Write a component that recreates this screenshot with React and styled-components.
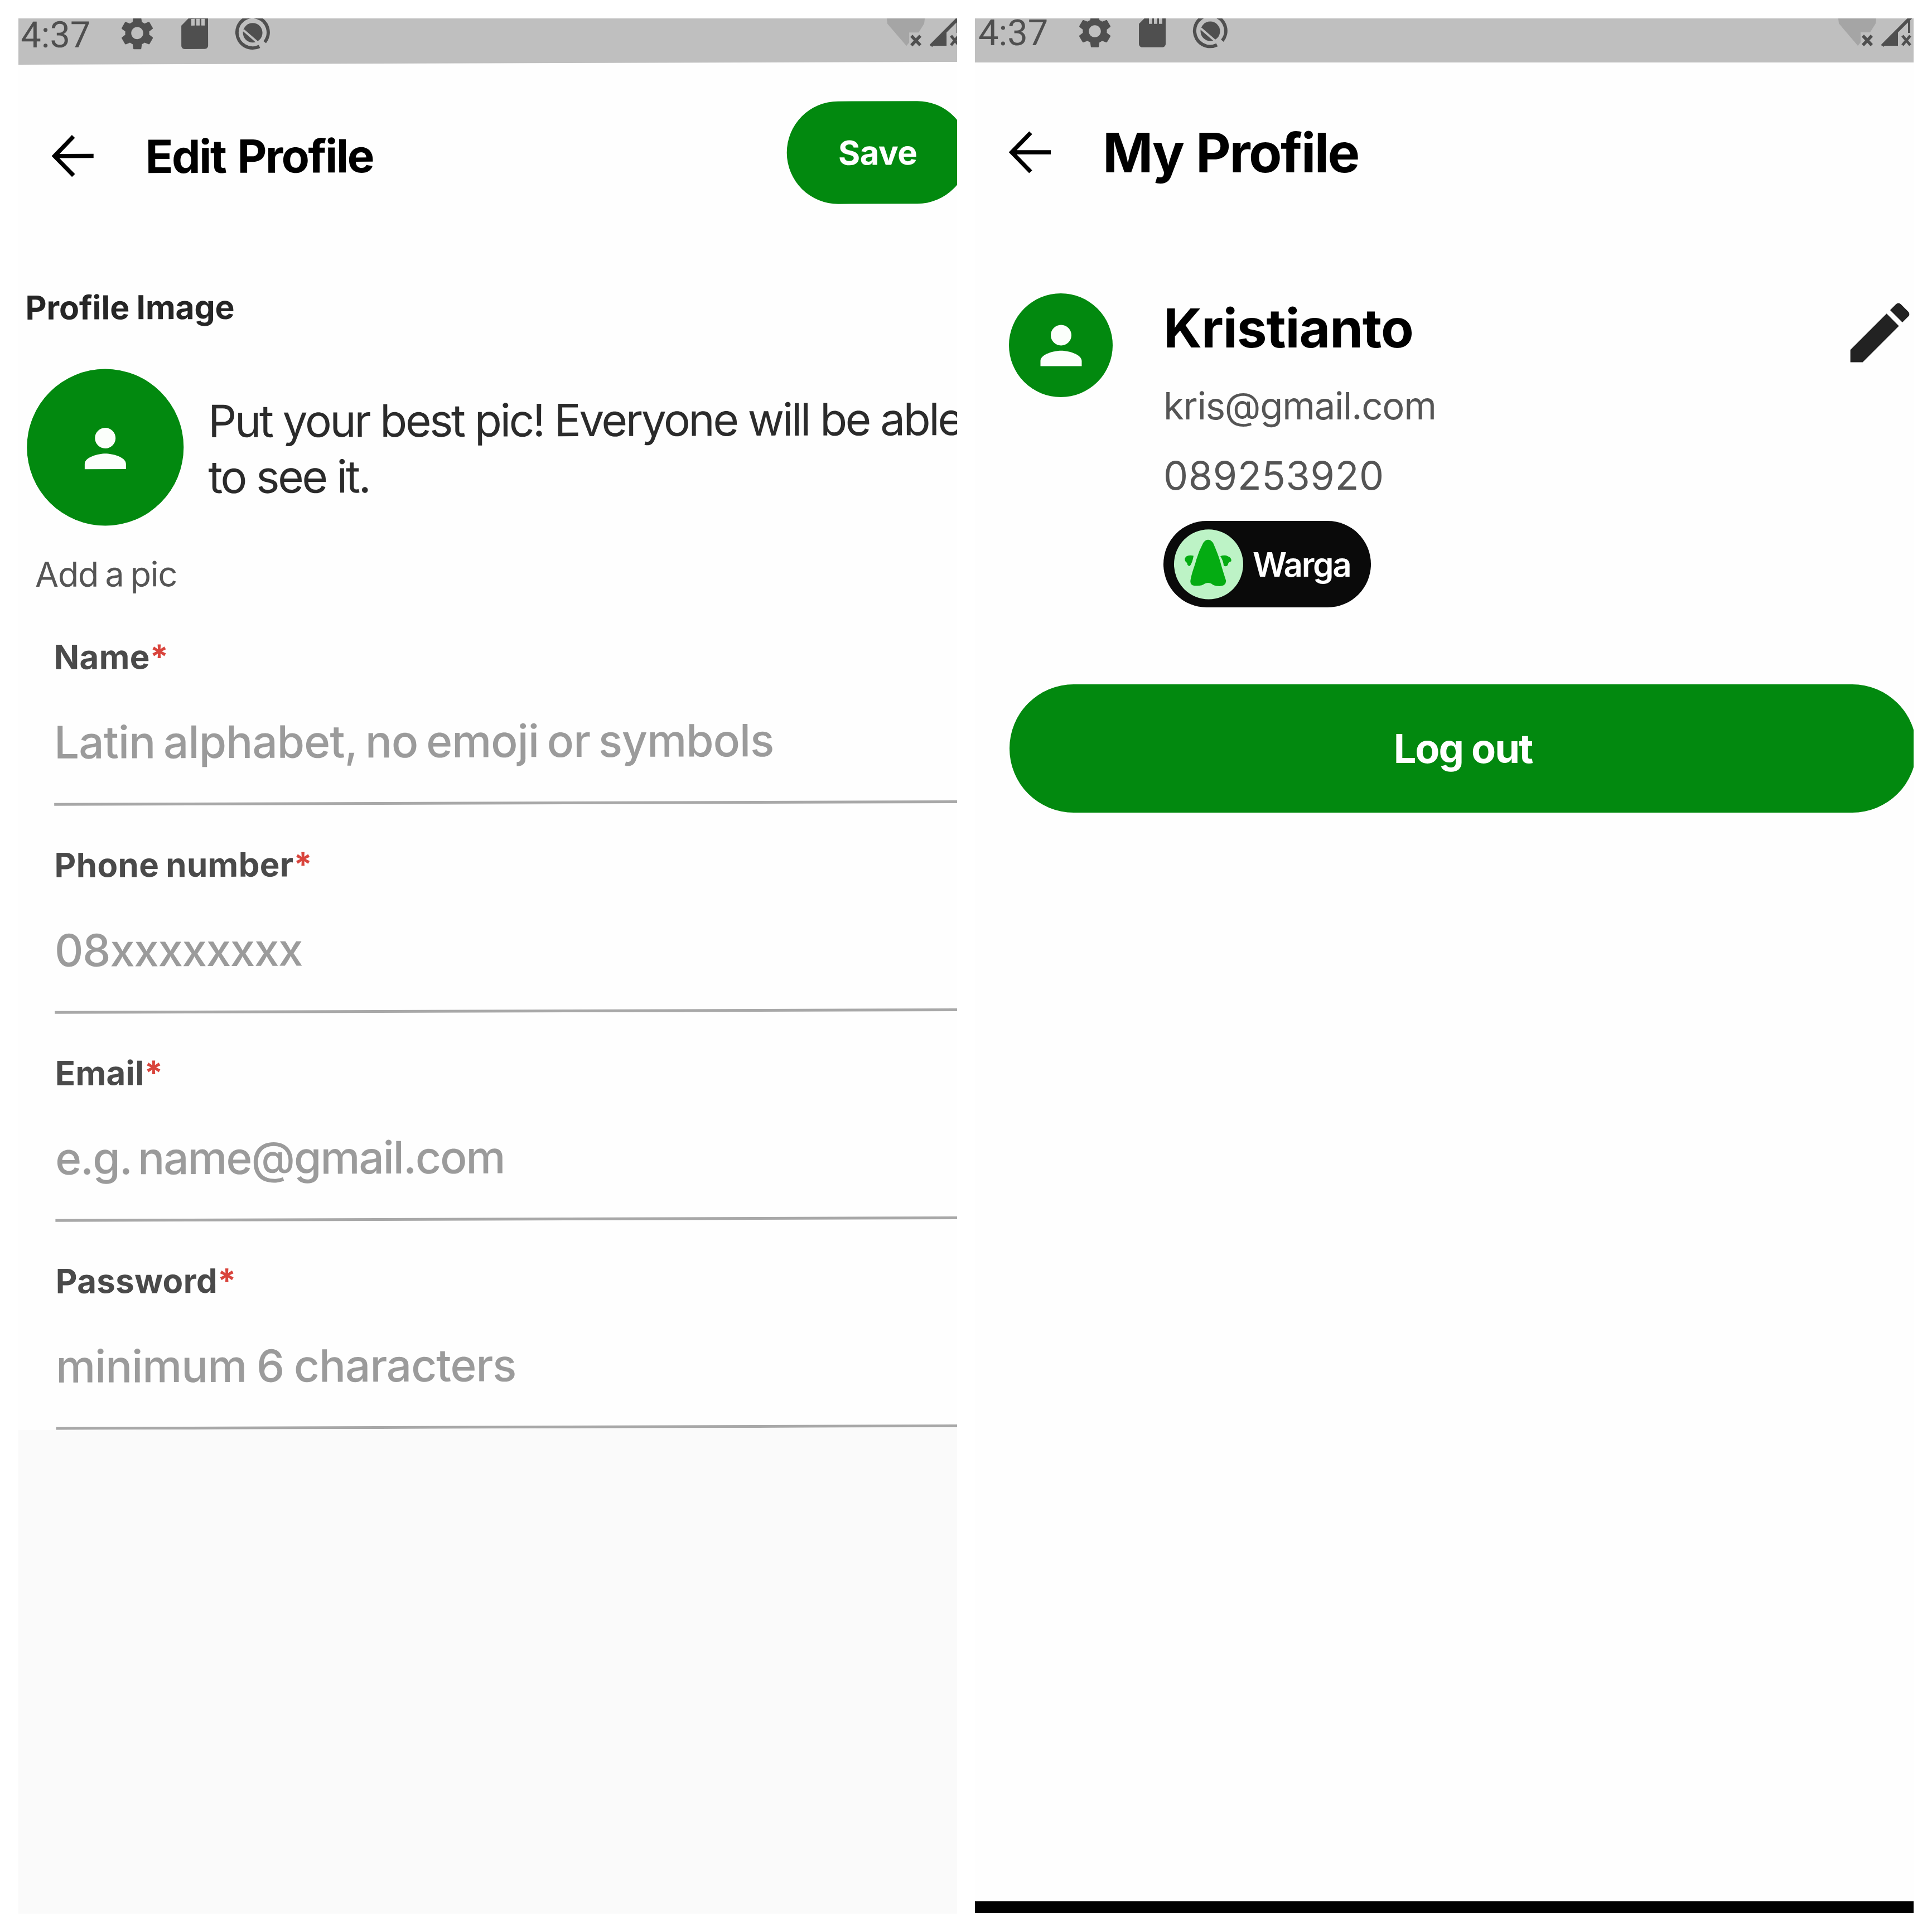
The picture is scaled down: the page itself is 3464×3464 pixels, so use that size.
import React from "react";
import styled, { createGlobalStyle } from "styled-components";

const GREEN = "#02890f";
const INK = "#4f4f4f";

const GlobalStyle = createGlobalStyle`
  * { box-sizing: border-box; }
  body { margin: 0; background: #fff; }
`;

const Board = styled.main`
  display: flex;
  gap: 32px;
  width: 3464px;
  height: 3464px;
  padding: 33px;
  overflow: hidden;
  font-family: Inter, "Liberation Sans", sans-serif;
  background: #fff;
`;

const Screen = styled.section`
  width: 1683px;
  height: 3398px;
  overflow: hidden;
  background: #fefefe;
`;

const Sheet = styled.div`
  display: flex;
  flex-direction: column;
  width: 1683px;
  height: 3398px;
  transform: rotate(${(p) => p.$tilt || 0}deg);
  transform-origin: 0 0;
`;

const StatusBar = styled.header`
  display: flex;
  flex: none;
  justify-content: space-between;
  height: ${(p) => p.$height}px;
  margin: 0 -20px;
  padding: 0 20px;
  background: #bfbfbf;
  box-shadow: 0 -20px 0 #bfbfbf;
`;

const StatusIcons = styled.div`
  display: flex;
  align-items: center;
  height: 54px;
  gap: 31px;
  padding-left: ${(p) => p.$inset}px;
  margin-top: ${(p) => p.$lift}px;
`;

const Clock = styled.span`
  width: 142px;
  padding-top: 6px;
  font: 400 65px/54px Roboto, sans-serif;
  color: ${INK};
`;

const SignalBox = styled.div`
  width: 125px;
  flex: none;
  margin-top: ${(p) => p.$drop}px;
  margin-right: ${(p) => p.$edge}px;
  svg { display: block; overflow: visible; }
`;

const AppBar = styled.div`
  display: flex;
  flex: none;
  align-items: center;
  height: ${(p) => p.$height}px;
  padding-left: ${(p) => p.$inset}px;
`;

const Title = styled.h1`
  flex: 1;
  margin: 0 0 0 92px;
  padding-top: 3px;
  font-size: ${(p) => p.$size}px;
  line-height: 120px;
  font-weight: 700;
  letter-spacing: ${(p) => p.$track}em;
  word-spacing: ${(p) => p.$space}em;
  color: #000;
  white-space: nowrap;
`;

const SaveButton = styled.button`
  flex: none;
  width: 326px;
  height: 184px;
  margin: -4px -20px 0 0;
  padding: 0;
  border: 0;
  border-radius: 92px;
  background: ${GREEN};
  color: #fff;
  font: 700 60px/80px Inter, sans-serif;
  letter-spacing: -0.01em;
`;

const SectionLabel = styled.h2`
  flex: none;
  margin: 68px 0 0 11px;
  font-size: 59px;
  line-height: 80px;
  font-weight: 700;
  letter-spacing: -0.004em;
  word-spacing: -0.02em;
  color: #262626;
`;

const PictureRow = styled.div`
  display: flex;
  flex: none;
  gap: 44px;
  margin: 70px 0 0 13px;
`;

const Avatar = styled.div`
  display: flex;
  flex: none;
  align-items: center;
  justify-content: center;
  width: ${(p) => p.$size}px;
  height: ${(p) => p.$size}px;
  padding-top: ${(p) => p.$drop || 0}px;
  border-radius: 50%;
  background: ${GREEN};
`;

const Hint = styled.p`
  margin: 44px 0 0;
  font-size: 80px;
  line-height: 100px;
  letter-spacing: -0.042em;
  word-spacing: 0;
  color: #2b2b2b;
  white-space: nowrap;
`;

const AddPicture = styled.span`
  flex: none;
  height: 87px;
  margin: 42px 0 0 27px;
  font-size: 61px;
  line-height: 90px;
  letter-spacing: -0.02em;
  word-spacing: -0.06em;
  color: #555;
`;

const Field = styled.div`
  display: flex;
  flex: none;
  flex-direction: column;
  gap: 63px;
  height: 373px;
  margin: 0 -20px 0 60px;
  padding-top: 66px;
  border-bottom: 5px solid #a8a8a8;
`;

const FieldLabel = styled.label`
  font-size: 60px;
  line-height: 80px;
  font-weight: 700;
  letter-spacing: 0.005em;
  word-spacing: -0.04em;
  color: #4a4a4a;
`;

const Required = styled.span`
  color: #d9443c;
`;

const Placeholder = styled.span`
  font-size: 80px;
  line-height: 100px;
  font-weight: 500;
  letter-spacing: ${(p) => p.$track}em;
  word-spacing: ${(p) => p.$space}em;
  color: #9b9b9b;
  white-space: nowrap;
`;

const Filler = styled.div`
  flex: none;
  height: 900px;
  margin: 0 -20px;
  background: #fafafa;
`;

const ProfileRow = styled.div`
  display: flex;
  flex: none;
  align-items: flex-start;
  height: 794px;
  padding: 93px 0 0 61px;
`;

const Details = styled.div`
  display: flex;
  flex: 1;
  flex-direction: column;
  align-items: flex-start;
  margin-left: 91px;
`;

const PersonName = styled.h2`
  margin: 2px 0 0;
  font-size: 96px;
  line-height: 120px;
  font-weight: 700;
  letter-spacing: -0.011em;
  color: #000;
`;

const Detail = styled.span`
  margin-top: ${(p) => p.$gap}px;
  font-size: ${(p) => p.$size}px;
  line-height: 90px;
  letter-spacing: ${(p) => p.$track}em;
  color: #555;
`;

const Badge = styled.div`
  display: flex;
  align-items: center;
  gap: 17px;
  width: 372px;
  height: 155px;
  margin: 36px 0 0;
  padding-left: 19px;
  border-radius: 78px;
  background: #0a0a0a;
  color: #fff;
  font-size: 60px;
  font-weight: 600;
  line-height: 80px;
  letter-spacing: -0.038em;
`;

const EditIcon = styled.svg`
  flex: none;
  margin-right: -10px;
`;

const LogoutButton = styled.button`
  flex: none;
  width: 1626px;
  height: 230px;
  margin: 0 0 0 62px;
  padding: 0;
  border: 0;
  border-radius: 115px;
  background: ${GREEN};
  color: #fff;
  font: 700 72px/90px Inter, sans-serif;
  letter-spacing: -0.028em;
  word-spacing: 0;
`;

const NavBar = styled.div`
  flex: none;
  height: 21px;
  margin: auto 0 1px;
  background: #000;
`;

const Gear = () => (
  <svg width="72" height="72" viewBox="0 0 24 24" fill={INK}>
    <path d="M19.14 12.94c.04-.3.06-.61.06-.94 0-.32-.02-.64-.07-.94l2.03-1.58a.49.49 0 0 0 .12-.61l-1.92-3.32a.488.488 0 0 0-.59-.22l-2.39.96c-.5-.38-1.03-.7-1.62-.94l-.36-2.54a.484.484 0 0 0-.48-.41h-3.84c-.24 0-.43.17-.47.41l-.36 2.54c-.59.24-1.13.57-1.62.94l-2.39-.96c-.22-.08-.47 0-.59.22L2.74 8.87c-.12.21-.08.47.12.61l2.03 1.58c-.05.3-.09.63-.09.94s.02.64.07.94l-2.03 1.58a.49.49 0 0 0-.12.61l1.92 3.32c.12.22.37.29.59.22l2.39-.96c.5.38 1.03.7 1.62.94l.36 2.54c.05.24.24.41.48.41h3.84c.24 0 .44-.17.47-.41l.36-2.54c.59-.24 1.13-.56 1.62-.94l2.39.96c.22.08.47 0 .59-.22l1.92-3.32c.12-.22.07-.47-.12-.61l-2.01-1.58zM12 15.6c-1.98 0-3.6-1.62-3.6-3.6s1.62-3.6 3.6-3.6 3.6 1.62 3.6 3.6-1.62 3.6-3.6 3.6z" />
  </svg>
);

const SdCard = () => (
  <svg width="72" height="72" viewBox="0 0.4 24 24" fill={INK}>
    <path d="M18 2h-8L4.02 8 4 20c0 1.1.9 2 2 2h12c1.1 0 2-.9 2-2V4c0-1.1-.9-2-2-2zm-6 6h-2V4h2v4zm3 0h-2V4h2v4zm3 0h-2V4h2v4z" />
  </svg>
);

const SlashedCircle = () => (
  <svg width="72" height="72" viewBox="0 0 72 72">
    <path d="M58.500 53A28 28 0 1 0 49 60.500" fill="none" stroke={INK} strokeWidth="6" />
    <circle cx="37" cy="36" r="17.500" fill={INK} />
    <path d="M20 31L58 64" stroke="#bfbfbf" strokeWidth="4" />
  </svg>
);

const Signals = () => (
  <svg width="134" height="56" viewBox="0 0 134 56">
    <path d="M-2 -8H68L66 9L56 25H39V43L34 49L0 9Z" fill="#a5a5a5" />
    <path d="M43 31L59 48M59 31L43 48" stroke={INK} strokeWidth="5.500" />
    <path d="M76 49L106 19V49Z" fill={INK} />
    <path d="M78 49L134 -7" stroke={INK} strokeWidth="6" />
    <path d="M126 -2V26" stroke={INK} strokeWidth="4" />
    <path d="M114 31L128 48M128 31L114 48" stroke={INK} strokeWidth="5" />
  </svg>
);

const BackArrow = () => (
  <svg width="76" height="76" viewBox="0 0 76 76" fill="none" stroke="#000" strokeWidth="7.500">
    <path d="M75 38H6M39 3L5 38L39 73" />
  </svg>
);

const Person = () => (
  <svg width="111" height="111" viewBox="0 0 24 24" fill="#fbfffb">
    <path d="M12 12c2.210 0 4-1.790 4-4s-1.790-4-4-4-4 1.790-4 4 1.790 4 4 4zm0 2c-2.670 0-8 1.340-8 4v2h16v-2c0-2.660-5.330-4-8-4z" />
  </svg>
);

const Pencil = () => (
  <EditIcon width="141" height="141" viewBox="0 0 24 24" fill="#222">
    <path d="M3 17.250V21h3.750L17.810 9.940l-3.750-3.750L3 17.250zM20.710 7.040a.996.996 0 0 0 0-1.410l-2.340-2.340a.996.996 0 0 0-1.410 0l-1.830 1.830 3.750 3.750 1.830-1.830z" />
  </EditIcon>
);

const Rocket = () => (
  <svg width="124" height="126" viewBox="75 88 372 377">
    <ellipse cx="261" cy="276" rx="186" ry="188" fill="#bdf3c6" />
    <g fill="#04ac12">
      <path d="M232 160Q258 128 285 160C300 195 318 235 330 285Q342 325 355 365Q353 396 312 393Q288 392 276 380Q258 371 240 380Q222 394 186 391Q158 388 164 358C172 315 185 290 195 250Q208 205 232 160Z" />
      <path d="M180 230Q140 222 133 246Q132 262 145 268Q147 286 160 285Q174 268 180 230Z" />
      <path d="M324 232Q348 224 364 232Q388 242 382 260Q366 264 364 280Q352 292 342 282Q340 256 324 232Z" />
    </g>
  </svg>
);

const Status = ({ height, inset, lift, drop, edge }) => (
  <StatusBar $height={height}>
    <StatusIcons $inset={inset} $lift={lift}>
      <Clock>4:37</Clock>
      <Gear />
      <SdCard />
      <SlashedCircle />
    </StatusIcons>
    <SignalBox $drop={drop} $edge={edge}>
      <Signals />
    </SignalBox>
  </StatusBar>
);

const fields = [
  { label: "Name", hint: "Latin alphabet, no emoji or symbols", track: -0.012, space: -0.07 },
  { label: "Phone number", hint: "08xxxxxxxx", track: -0.018, space: 0 },
  { label: "Email", hint: "e.g. name@gmail.com", track: -0.026, space: -0.09 },
  { label: "Password", hint: "minimum 6 characters", track: -0.014, space: -0.03 },
];

const EditProfile = () => (
  <Screen>
    <Sheet $tilt={-0.17}>
      <Status height={83} inset={4} lift={0} drop={5} edge={0} />
      <AppBar $height={328} $inset={59}>
        <BackArrow />
        <Title $size={82} $track={-0.031} $space={0.05}>Edit Profile</Title>
        <SaveButton>Save</SaveButton>
      </AppBar>
      <SectionLabel>Profile Image</SectionLabel>
      <PictureRow>
        <Avatar $size={281} $drop={4}>
          <Person />
        </Avatar>
        <Hint>
          Put your best pic! Everyone will be able
          <br />
          to see it.
        </Hint>
      </PictureRow>
      <AddPicture>Add a pic</AddPicture>
      {fields.map((f) => (
        <Field key={f.label}>
          <FieldLabel>
            {f.label}
            <Required>*</Required>
          </FieldLabel>
          <Placeholder $track={f.track} $space={f.space}>{f.hint}</Placeholder>
        </Field>
      ))}
      <Filler />
    </Sheet>
  </Screen>
);

const MyProfile = () => (
  <Screen>
    <Sheet>
      <Status height={79} inset={6} lift={-4} drop={0} edge={9} />
      <AppBar $height={321} $inset={61}>
        <BackArrow />
        <Title $size={97} $track={-0.026} $space={0.02}>My Profile</Title>
      </AppBar>
      <ProfileRow>
        <Avatar $size={186}>
          <Person />
        </Avatar>
        <Details>
          <PersonName>Kristianto</PersonName>
          <Detail $gap={35} $size={67} $track={-0.018}>kris@gmail.com</Detail>
          <Detail $gap={35} $size={70} $track={0.01}>089253920</Detail>
          <Badge>
            <Rocket />
            Warga
          </Badge>
        </Details>
        <Pencil />
      </ProfileRow>
      <LogoutButton>Log out</LogoutButton>
      <NavBar />
    </Sheet>
  </Screen>
);

export default function App() {
  return (
    <>
      <GlobalStyle />
      <Board>
        <EditProfile />
        <MyProfile />
      </Board>
    </>
  );
}
